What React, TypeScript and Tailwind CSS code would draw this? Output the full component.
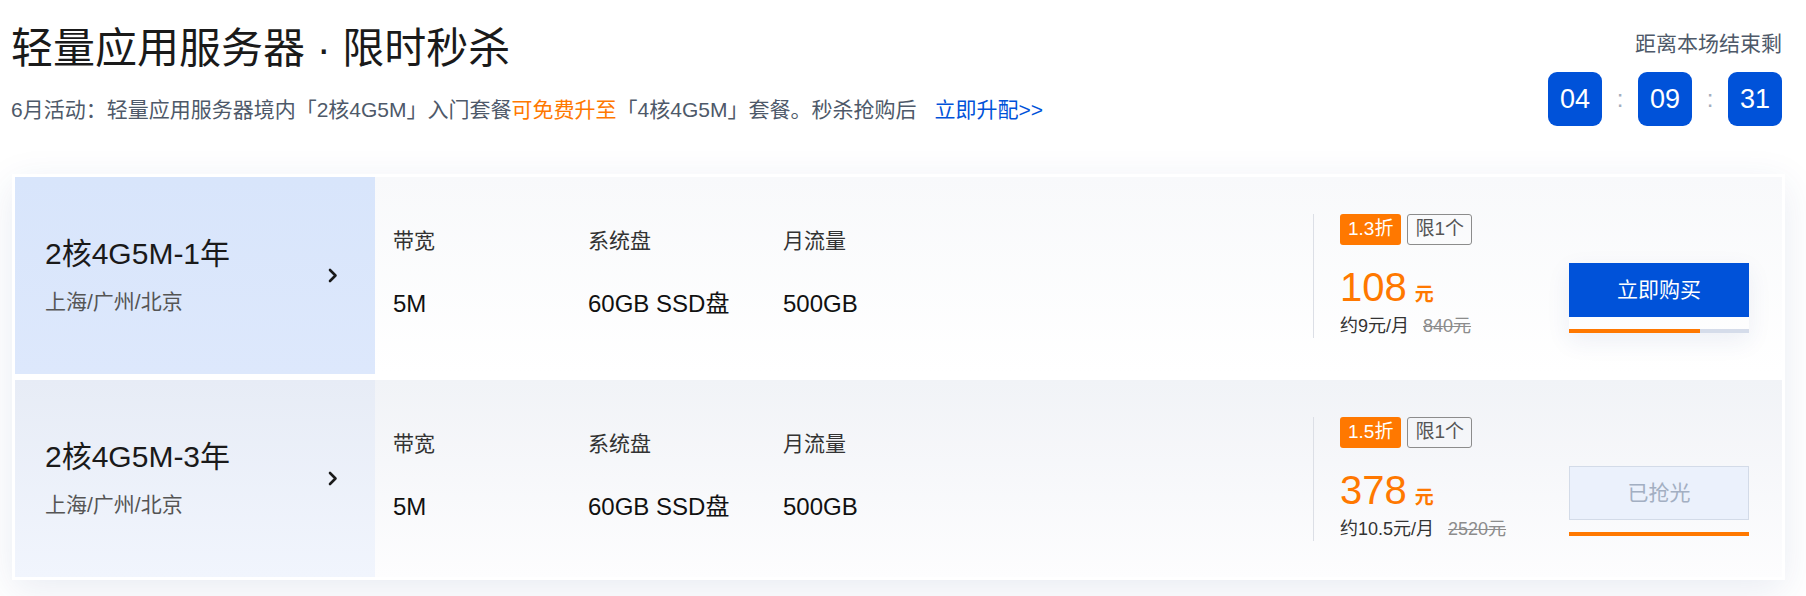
import React from 'react';

// 轻量应用服务器 · 限时秒杀 —— 秒杀卡片列表

type Deal = {
  id: string;
  name: string;
  regions: string;
  specs: { label: string; value: string }[];
  discount: string;
  limit: string;
  price: string;
  monthly: string;
  original: string;
  soldOut: boolean;
  progress: number;
};

const DEALS: Deal[] = [
  {
    id: '1y',
    name: '2核4G5M-1年',
    regions: '上海/广州/北京',
    specs: [
      { label: '带宽', value: '5M' },
      { label: '系统盘', value: '60GB SSD盘' },
      { label: '月流量', value: '500GB' },
    ],
    discount: '1.3折',
    limit: '限1个',
    price: '108',
    monthly: '约9元/月',
    original: '840元',
    soldOut: false,
    progress: 73,
  },
  {
    id: '3y',
    name: '2核4G5M-3年',
    regions: '上海/广州/北京',
    specs: [
      { label: '带宽', value: '5M' },
      { label: '系统盘', value: '60GB SSD盘' },
      { label: '月流量', value: '500GB' },
    ],
    discount: '1.5折',
    limit: '限1个',
    price: '378',
    monthly: '约10.5元/月',
    original: '2520元',
    soldOut: true,
    progress: 100,
  },
];

const FONT = "font-['Liberation_Sans','Noto_Sans_CJK_SC',sans-serif]";

function Chevron() {
  return (
    <svg width="10" height="15" viewBox="0 0 10 15" fill="none">
      <path d="M2 2l5.5 5.5L2 13" stroke="#1a1a1a" strokeWidth="2.6" strokeLinecap="round" strokeLinejoin="round" />
    </svg>
  );
}

function Countdown() {
  const parts = ['04', '09', '31'];
  return (
    <div className="flex flex-col items-end pt-[5px]">
      <p className="text-[21px] leading-[28px] text-[#4e5969]">距离本场结束剩</p>
      <div className="mt-[14px] flex items-center">
        {parts.map((p, i) => (
          <React.Fragment key={i}>
            {i > 0 && <span className="w-[36px] text-center text-[24px] leading-none text-[#a3adbd]">:</span>}
            <span className="grid h-[54px] w-[54px] place-items-center rounded-[9px] bg-[#0052d9] text-[27px] text-white">
              {p}
            </span>
          </React.Fragment>
        ))}
      </div>
    </div>
  );
}

function DealCard({ deal, active }: { deal: Deal; active: boolean }) {
  return (
    <div
      className={
        active
          ? 'flex h-[197px] bg-gradient-to-b from-[#f8f9fb] to-white'
          : 'flex h-[197px] bg-gradient-to-b from-[#f1f3f7] to-[#fdfdfe]'
      }
    >
      {/* 套餐名 */}
      <div
        className={
          active
            ? 'flex w-[360px] items-center justify-between bg-gradient-to-b from-[#d8e5fb] to-[#dde8fc] pl-[30px] pr-[37px]'
            : 'flex w-[360px] items-center justify-between bg-gradient-to-b from-[#e7ecf6] to-[#f1f5fd] pl-[30px] pr-[37px]'
        }
      >
        <div>
          <p className="text-[30px] leading-[36px] text-[#1a1a1a]">{deal.name}</p>
          <p className="mt-[16px] text-[21px] leading-[28px] text-[#555]">{deal.regions}</p>
        </div>
        <Chevron />
      </div>

      {/* 规格 */}
      <div className="mb-[5px] flex flex-1 items-center pl-[18px]">
        {deal.specs.map((s) => (
          <div key={s.label} className="w-[195px]">
            <p className="text-[21px] leading-[28px] text-[#333]">{s.label}</p>
            <p className="mt-[33px] text-[24px] leading-[32px] text-[#111]">{s.value}</p>
          </div>
        ))}
      </div>

      {/* 价格 */}
      <div className="flex items-center">
        <div className="flex h-[124px] w-[256px] flex-col border-l border-[#dcdfe6] pl-[26px]">
          <div className="flex h-[32px] gap-[6px]">
            <span className="flex items-center rounded-[3px] bg-[#ff7800] px-[8px] text-[19px] text-white">{deal.discount}</span>
            <span className="flex items-center rounded-[3px] border border-[#8c8c8c] px-[7px] text-[19px] text-[#555]">{deal.limit}</span>
          </div>
          <div className="mt-[20px] flex items-baseline text-[#ff7800]">
            <span className="text-[40px] leading-[44px]">{deal.price}</span>
            <span className="ml-[8px] text-[19px] font-bold">元</span>
          </div>
          <div className="mt-[4px] flex text-[18px] leading-[24px]">
            <span className="text-[#333]">{deal.monthly}</span>
            <span className="ml-[14px] text-[#8c8c8c] line-through">{deal.original}</span>
          </div>
        </div>

        <div className={active ? 'mr-[33px] mt-[45px] w-[180px] shadow-[0_8px_24px_rgba(40,70,140,0.08)]' : 'mr-[33px] mt-[45px] w-[180px]'}>
          {deal.soldOut ? (
            <button
              type="button"
              className="h-[54px] w-full border border-[#d3dbe8] bg-[#ebf1fc] text-[21px] text-[#a3afc2]"
            >
              已抢光
            </button>
          ) : (
            <button type="button" className="h-[54px] w-full bg-[#0052d9] text-[21px] text-white">
              立即购买
            </button>
          )}
          <div className="mt-[12px] h-[4px] w-full bg-[#d5dcea]">
            <div className="h-full bg-[#ff7800]" style={{ width: `${deal.progress}%` }} />
          </div>
        </div>
      </div>
    </div>
  );
}

export default function App() {
  return (
    <div className={`h-[596px] w-[1806px] overflow-hidden bg-white pt-[25px] ${FONT}`}>
      <header className="flex items-start justify-between pl-[11px] pr-[24px]">
        <div>
          <h1 className="text-[42px] leading-[48px] text-[#1a1a1a]">轻量应用服务器 · 限时秒杀</h1>
          <p className="mt-[23px] text-[21px] leading-[28px] text-[#4e5969]">
            6月活动：轻量应用服务器境内「2核4G5M」入门套餐
            <span className="text-[#ff7800]">可免费升至</span>
            「4核4G5M」套餐。秒杀抢购后
            <a className="ml-[18px] text-[#0052d9]">立即升配&gt;&gt;</a>
          </p>
        </div>
        <Countdown />
      </header>

      <section className="ml-[12px] mr-[21px] mt-[48px] flex flex-col gap-[6px] bg-white p-[3px] shadow-[0_10px_36px_rgba(40,70,140,0.1)]">
        {DEALS.map((d, i) => (
          <DealCard key={d.id} deal={d} active={i === 0} />
        ))}
      </section>
    </div>
  );
}
